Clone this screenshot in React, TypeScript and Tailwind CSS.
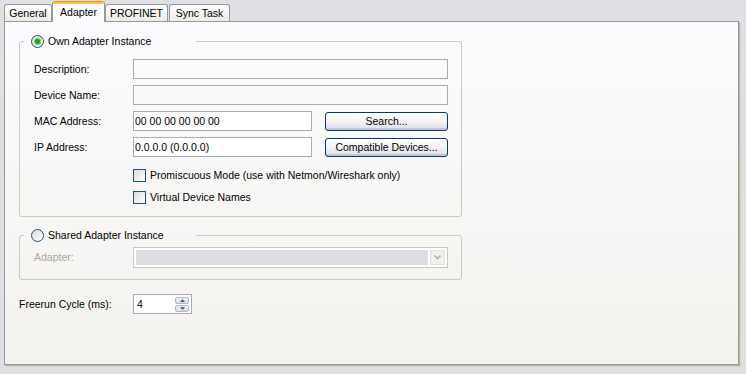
import React from "react";

function Tab({ label, width, selected }: { label: string; width: string; selected?: boolean }) {
  if (selected) {
    return (
      <div
        className={`${width} relative z-10 -mb-px h-[21px] flex flex-col rounded-t-[3px] border-x border-[#919b9c] bg-[#fcfcfe] overflow-hidden`}
      >
        <div className="h-[1px] bg-[#e68b2c]" />
        <div className="h-[2px] bg-[#ffc73c]" />
        <div className="flex-1 flex items-center justify-center pb-[2px]">{label}</div>
      </div>
    );
  }
  return (
    <div
      className={`${width} h-[17px] flex items-center justify-center rounded-t-[3px] border-x border-t border-[#919b9c] bg-linear-to-b from-white to-[#ecebe6]`}
    >
      {label}
    </div>
  );
}

function Radio({ checked }: { checked?: boolean }) {
  return (
    <span className="w-[13px] h-[13px] shrink-0 rounded-full border border-[#1c5180] bg-linear-to-br from-[#dcdcd7] to-white flex items-center justify-center">
      {checked && (
        <span className="w-[5px] h-[5px] rounded-full bg-[#21a121] shadow-[0_0_0_1px_#72d172]" />
      )}
    </span>
  );
}

function Checkbox({ label }: { label: string }) {
  return (
    <div className="h-[13px] flex items-center ml-[99px]">
      <span className="w-[13px] h-[13px] shrink-0 border border-[#1c5180] bg-linear-to-br from-[#dcdcd7] to-white" />
      <span className="ml-[4px]">{label}</span>
    </div>
  );
}

function TextBox({ value, width, plain }: { value?: string; width: string; plain?: boolean }) {
  return (
    <div
      className={`${width} h-[20px] border border-[#a5acb5] pl-[1px] flex items-center ${
        plain ? "bg-transparent" : "bg-white"
      }`}
    >
      {value}
    </div>
  );
}

function Button({ label }: { label: string }) {
  return (
    <div className="ml-[13px] w-[123px] h-[19px] rounded-[3px] border border-[#003c74] bg-linear-to-b from-white via-[#f3f3f5] to-[#dcdce6] shadow-[inset_0_-2px_0_#c4c5d6] flex items-center justify-center">
      {label}
    </div>
  );
}

function Row({ label, children }: { label: string; children: React.ReactNode }) {
  return (
    <div className="h-[20px] flex items-center">
      <span className="w-[99px] shrink-0">{label}</span>
      {children}
    </div>
  );
}

export default function App() {
  return (
    <div className="w-[746px] h-[374px] overflow-hidden bg-[#e0dfe3] text-black text-[10.5px] leading-none font-['Liberation_Sans',Arial,sans-serif]">
      <div className="h-[21px] flex items-end pl-[4px]">
        <Tab label="General" width="w-[48px]" />
        <Tab label="Adapter" width="w-[53px]" selected />
        <Tab label="PROFINET" width="w-[63px]" />
        <div className="w-[1px]" />
        <Tab label="Sync Task" width="w-[61px]" />
      </div>

      <div className="ml-[4px] w-[735px] h-[344px] border border-[#919b9c] bg-linear-to-b from-[#fcfcfe] to-[#f3f2ee] shadow-[1px_1px_0_#b5b4ad,2px_2px_0_#d2d1cc] pl-[14px] pt-[13px]">
        <fieldset className="w-[443px] m-0 p-0 border border-[#c9c8c2] rounded-[3px]">
          <legend className="ml-[4px] w-[172px] h-[13px] pl-[7px] flex items-center">
            <Radio checked />
            <span className="ml-[4px]">Own Adapter Instance</span>
          </legend>
          <div className="pt-[11px] pb-[12px] pl-[14px] flex flex-col">
            <div className="flex flex-col gap-[6px]">
              <Row label="Description:">
                <TextBox width="w-[315px]" plain />
              </Row>
              <Row label="Device Name:">
                <TextBox width="w-[315px]" plain />
              </Row>
              <Row label="MAC Address:">
                <TextBox width="w-[179px]" value="00 00 00 00 00 00" />
                <Button label="Search..." />
              </Row>
              <Row label="IP Address:">
                <TextBox width="w-[179px]" value="0.0.0.0 (0.0.0.0)" />
                <Button label="Compatible Devices..." />
              </Row>
            </div>
            <div className="mt-[12px] flex flex-col gap-[9px]">
              <Checkbox label="Promiscuous Mode (use with Netmon/Wireshark only)" />
              <Checkbox label="Virtual Device Names" />
            </div>
          </div>
        </fieldset>

        <fieldset className="mt-[12px] w-[443px] m-0 p-0 border border-[#c9c8c2] rounded-[3px]">
          <legend className="ml-[4px] w-[172px] h-[13px] pl-[7px] flex items-center">
            <Radio />
            <span className="ml-[4px]">Shared Adapter Instance</span>
          </legend>
          <div className="pt-[5px] pb-[11px] pl-[14px]">
            <div className="h-[21px] flex items-center">
              <span className="w-[99px] shrink-0 text-[#aca899]">Adapter:</span>
              <div className="w-[315px] h-[21px] border border-[#c9c7ba] bg-white p-[2px] flex">
                <div className="flex-1 bg-[#dcdce2]" />
                <div className="ml-[2px] w-[15px] bg-[#f1f0ea] border border-[#e3e2dc] flex items-center justify-center">
                  <svg width="7" height="5" viewBox="0 0 7 5">
                    <path d="M0.5 0.5 L3.5 3.5 L6.5 0.5" stroke="#b4b3ab" strokeWidth="1.6" fill="none" />
                  </svg>
                </div>
              </div>
            </div>
          </div>
        </fieldset>

        <div className="mt-[14px] h-[20px] flex items-center">
          <span className="w-[114px] shrink-0">Freerun Cycle (ms):</span>
          <div className="w-[59px] h-[20px] border border-[#a5acb5] bg-white flex items-center">
            <span className="flex-1 pl-[3px]">4</span>
            <div className="mr-[2px] w-[14px] flex flex-col gap-[1px]">
              <div className="h-[7px] rounded-[2px] border border-[#b3b6c6] bg-linear-to-b from-[#f3f4f8] to-[#d8dae4] flex items-center justify-center">
                <svg width="5" height="3" viewBox="0 0 5 3">
                  <path d="M0 3 L2.5 0 L5 3 Z" fill="#4d6185" />
                </svg>
              </div>
              <div className="h-[7px] rounded-[2px] border border-[#b3b6c6] bg-linear-to-b from-[#f3f4f8] to-[#d8dae4] flex items-center justify-center">
                <svg width="5" height="3" viewBox="0 0 5 3">
                  <path d="M0 0 L2.5 3 L5 0 Z" fill="#4d6185" />
                </svg>
              </div>
            </div>
          </div>
        </div>
      </div>
    </div>
  );
}
